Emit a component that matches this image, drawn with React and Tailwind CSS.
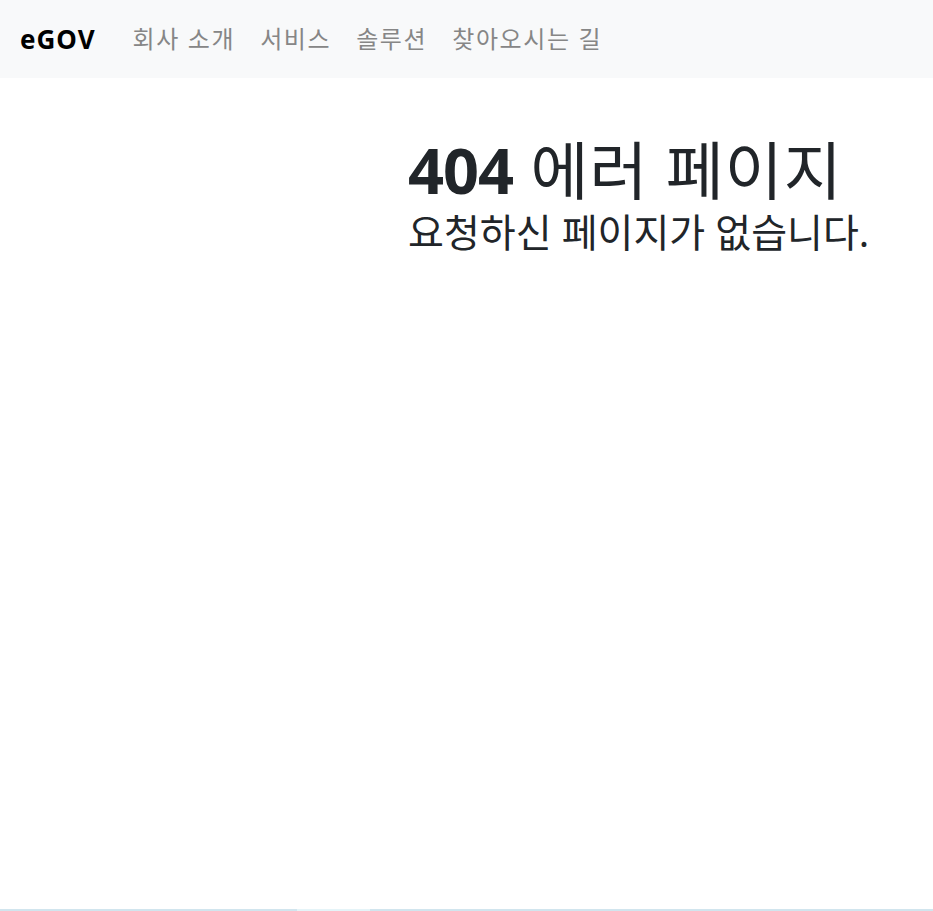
import React from 'react'

const links = ['회사 소개', '서비스', '솔루션', '찾아오시는 길']

export default function App() {
    return (
        <div
            className="flex min-h-[911px] flex-col bg-white"
            style={{ fontFamily: '"Noto Sans", "Noto Sans CJK KR", sans-serif' }}
        >
            <nav className="flex h-[78px] items-center bg-[#f8f9fa] pl-[20px]">
                <a className="mr-[24px] text-[26px] font-bold leading-none tracking-[1px] text-black">
                    eGOV
                </a>
                <ul className="flex items-center gap-[25px] pl-[13px]">
                    {links.map((label) => (
                        <li key={label}>
                            <a className="block text-[24px] leading-none tracking-[1.6px] text-[#868686]">
                                {label}
                            </a>
                        </li>
                    ))}
                </ul>
            </nav>

            <main className="flex-1 pl-[408px] pt-[57px] text-[#212529]">
                <h1 className="text-[63px] leading-[1.1] tracking-[1px]">
                    <span className="font-bold tracking-[-1px]">404</span> 에러 페이지
                </h1>
                <p className="mt-[7px] text-[39px] leading-[1.1]">
                    요청하신 페이지가 없습니다.
                </p>
            </main>

            <div className="flex h-[2px]">
                <div className="w-[297px] bg-[#d1e5ee]" />
                <div className="w-[73px] bg-[#e5f4f8]" />
                <div className="flex-1 bg-[#d1e5ee]" />
            </div>
        </div>
    )
}
